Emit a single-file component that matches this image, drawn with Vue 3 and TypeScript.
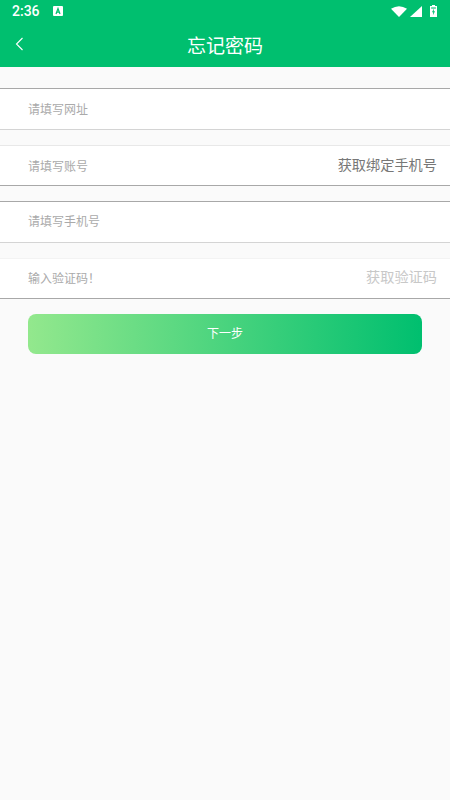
<script setup lang="ts">
interface Row {
  label: string
  action?: string
  actionClass?: string
  rowClass: string
}
const rows: Row[] = [
  { label: '请填写网址', rowClass: 'dark-top light-bottom' },
  { label: '请填写账号', action: '获取绑定手机号', actionClass: 'strong', rowClass: 'light-top dark-bottom' },
  { label: '请填写手机号', rowClass: 'dark-top light-bottom' },
  { label: '输入验证码！', action: '获取验证码', actionClass: 'faint', rowClass: 'faint-top dark-bottom' },
]
</script>

<template>
  <div class="page">
    <header class="head">
      <div class="status">
        <span class="time">2:36</span>
        <svg class="a-icon" width="10" height="10" viewBox="0 0 10 10">
          <rect width="10" height="10" rx="1" fill="#fff" />
          <path d="M3 8 L5 2.5 L7 8 M3.8 6.2 H6.2" fill="none" stroke="#00bf6f" stroke-width="1.2" />
        </svg>
        <span class="spacer"></span>
        <svg class="wifi" width="16" height="11" viewBox="0 0 16 11"><path d="M0 2.8 Q8 -2.4 16 2.8 L8 11 Z" fill="#fff" /></svg>
        <svg class="signal" width="12" height="11" viewBox="0 0 12 11"><path d="M12 0 V11 H0 Z" fill="#fff" /></svg>
        <svg class="battery" width="7" height="12" viewBox="0 0 7 12">
          <path d="M2 0 H5 V1 H7 V12 H0 V1 H2 Z" fill="#fff" />
          <path d="M1.1 2 H5.9 V4 H1.1 Z" fill="#00bf6f" opacity="0.55" />
          <path d="M3.9 3.6 L2 7.2 H3.2 L2.9 10.2 L5 6.2 H3.7 Z" fill="#00bf6f" />
        </svg>
      </div>
      <div class="nav">
        <svg class="back" width="9" height="14" viewBox="0 0 9 14">
          <path d="M7.5 1 L1.5 7 L7.5 13" fill="none" stroke="#fff" stroke-width="1.1" />
        </svg>
        <h1 class="title">忘记密码</h1>
      </div>
    </header>

    <main class="form">
      <div v-for="row in rows" :key="row.label" class="row" :class="row.rowClass">
        <span class="label">{{ row.label }}</span>
        <span v-if="row.action" class="action" :class="row.actionClass">{{ row.action }}</span>
      </div>
      <button class="next" type="button">下一步</button>
    </main>
  </div>
</template>

<style scoped>
.page {
  width: 450px;
  height: 800px;
  background: #fafafa;
  font-family: "Noto Sans CJK SC", "Roboto", sans-serif;
  display: flex;
  flex-direction: column;
  overflow: hidden;
}
.head {
  background: #00bf6f;
  height: 67px;
  color: #fff;
  flex: none;
}
.status {
  height: 22px;
  display: flex;
  align-items: center;
  padding: 0 13px 0 12px;
}
.time {
  font-family: Roboto, sans-serif;
  font-size: 14px;
  font-weight: 500;
  width: 41px;
}
.spacer {
  flex: 1;
}
.signal {
  margin-left: 3px;
}
.battery {
  margin-left: 8px;
}
.nav {
  height: 45px;
  display: flex;
  align-items: center;
  justify-content: center;
  position: relative;
}
.back {
  position: absolute;
  left: 15px;
  top: 15px;
}
.title {
  margin: 0;
  font-size: 19px;
  font-weight: 400;
  line-height: 1;
}
.form {
  display: flex;
  flex-direction: column;
  padding-top: 21px;
}
.row {
  height: 42px;
  box-sizing: border-box;
  background: #fff;
  display: flex;
  align-items: center;
  justify-content: space-between;
  padding: 0 13px 2px 28px;
  margin-bottom: 15px;
}
.row:nth-child(even) {
  height: 41px;
  padding-bottom: 1px;
}
.row:nth-child(3) {
  padding-bottom: 4px;
}
.row:nth-child(4) {
  padding-bottom: 3px;
}
.dark-top {
  border-top: 1px solid #a8a8a8;
}
.light-top {
  border-top: 1px solid #e8e8e8;
}
.faint-top {
  border-top: 1px solid #f3f3f3;
}
.dark-bottom {
  border-bottom: 1px solid #a8a8a8;
}
.light-bottom {
  border-bottom: 1px solid #d4d4d4;
}
.label {
  font-size: 12px;
  color: #aaa;
}
.action {
  font-size: 14.2px;
  margin-bottom: 2px;
}
.strong {
  color: #777;
}
.faint {
  color: #c8c8c8;
}
.next {
  margin: 0 28px;
  height: 40px;
  border: none;
  border-radius: 8px;
  background: linear-gradient(90deg, #93e88d, #00bf6f);
  color: #fff;
  font-family: inherit;
  font-size: 12px;
  padding: 0 0 4px;
  flex: none;
}
</style>
